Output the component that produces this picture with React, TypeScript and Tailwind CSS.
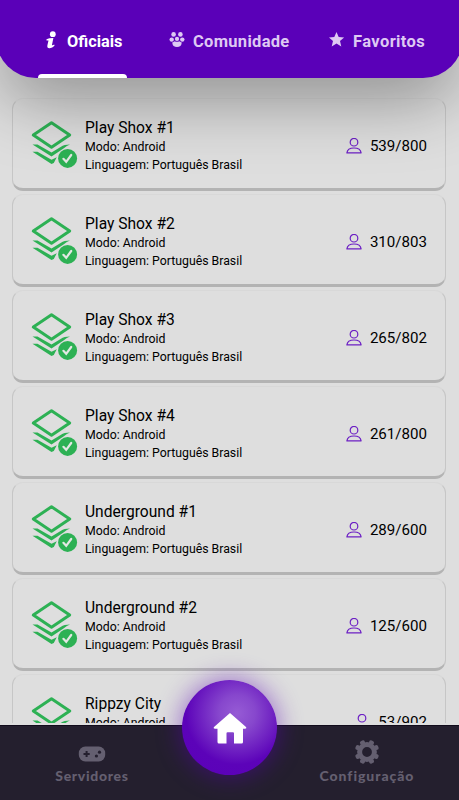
import type { ReactNode } from 'react';

interface Server {
  name: string;
  mode: string;
  language: string;
  players: string;
}

const servers: Server[] = [
  { name: 'Play Shox #1', mode: 'Android', language: 'Português Brasil', players: '539/800' },
  { name: 'Play Shox #2', mode: 'Android', language: 'Português Brasil', players: '310/803' },
  { name: 'Play Shox #3', mode: 'Android', language: 'Português Brasil', players: '265/802' },
  { name: 'Play Shox #4', mode: 'Android', language: 'Português Brasil', players: '261/800' },
  { name: 'Underground #1', mode: 'Android', language: 'Português Brasil', players: '289/600' },
  { name: 'Underground #2', mode: 'Android', language: 'Português Brasil', players: '125/600' },
  { name: 'Rippzy City', mode: 'Android', language: 'Português Brasil', players: '53/902' },
];

function InfoIcon() {
  return (
    <svg width="12" height="18" viewBox="0 0 12 18" fill="currentColor">
      <circle cx="7.8" cy="3.2" r="2.9" />
      <path d="M1.5 8.2Q3.8 7 8.4 7L6.9 14.2q1.2.2 2.3-.8l.3 1.4Q7.2 17.4 4.3 17.2 1.8 17 2.4 14.2L3.5 9.5H1.5Z" />
    </svg>
  );
}

function CommunityIcon() {
  return (
    <svg width="16" height="17" viewBox="0 0 16 17" fill="currentColor">
      <circle cx="4.6" cy="3.4" r="2.3" />
      <circle cx="11.4" cy="3.4" r="2.3" />
      <circle cx="2.7" cy="8.6" r="2.2" />
      <circle cx="13.3" cy="8.6" r="2.2" />
      <circle cx="8" cy="7.9" r="2.1" />
      <path d="M3.2 11.5q1.6-.2 2.5-1.3Q8 11.5 10.3 10.2q.9 1.1 2.5 1.3-.5 4.6-4.8 4.6T3.2 11.5Z" />
    </svg>
  );
}

function StarIcon() {
  return (
    <svg width="16" height="17" viewBox="0 0 16 17" fill="currentColor">
      <path d="M7.5 1 9.7 6.1 15.1 6.5 11 10 12.3 15.6 7.5 12.6 2.7 15.6 4 10 0 6.5 5.3 6.1Z" />
    </svg>
  );
}

function LayersIcon() {
  return (
    <svg width="47" height="48" viewBox="0 0 47 48" className="shrink-0">
      <path d="M20.5 2.8 38.7 15 20.5 27.2 2.3 15Z" fill="none" stroke="#2db154" strokeWidth="3" strokeLinejoin="round" />
      <path d="M1.5 24.6H6.5L20.5 32.5 30 26.7Q33 24.6 39 24.6 36 25.8 32.5 28.5L20.5 36.6Z" fill="#2db154" />
      <path d="M1.5 31.8H6.5L20.5 39.8 25.8 37.2 24.2 40.2 22.8 43 20.5 44Z" fill="#2db154" />
      <circle cx="36.6" cy="38.4" r="9.5" fill="#2db154" />
      <path d="m32.4 38.8 2.8 3 5-6.8" fill="none" stroke="#e4e7e4" strokeWidth="2.2" strokeLinecap="round" />
    </svg>
  );
}

function PlayerIcon() {
  return (
    <svg width="16" height="17" viewBox="0 0 16 17" fill="none" stroke="#6c1fc4" strokeWidth="1.2">
      <circle cx="8" cy="4.2" r="3.8" />
      <path d="M.9 14.9Q1.5 10 8 10T15.1 14.9Z" strokeLinejoin="round" />
    </svg>
  );
}

function GamepadIcon() {
  return (
    <svg width="28" height="16" viewBox="0 0 28 16">
      <rect x=".8" y=".5" width="26.4" height="15" rx="6.5" fill="#645f70" />
      <path d="M5.5 8h6.2M8.6 4.9v6.2" stroke="#241f2e" strokeWidth="2" />
      <circle cx="18.4" cy="10" r="1.6" fill="#241f2e" />
      <circle cx="21.5" cy="6.2" r="1.6" fill="#241f2e" />
    </svg>
  );
}

function GearIcon() {
  return (
    <svg width="24" height="24" viewBox="0 0 24 24">
      <circle cx="12" cy="12" r="7.4" fill="none" stroke="#645f70" strokeWidth="5" />
      <path
        d="m16 2.4 1 .4M21.2 7l.4 1M21.6 16l-.4 1M17 21.2l-1 .4M8 21.6l-1-.4M2.8 17l-.4-1M2.4 8l.4-1M7 2.8l1-.4"
        stroke="#645f70"
        strokeWidth="4"
        strokeLinecap="round"
      />
    </svg>
  );
}

function Tab({ icon, label, className }: { icon: ReactNode; label: string; className: string }) {
  return (
    <div className={`flex items-start pt-[31px] ${className}`}>
      {icon}
      <span className="whitespace-nowrap leading-[22px] font-bold">{label}</span>
    </div>
  );
}

function ServerCard({ server }: { server: Server }) {
  return (
    <div className="flex h-[93px] shrink-0 rounded-[11px] border border-b-[3px] border-x-[#c6c6c6] border-t-[#d8d8d8] border-b-[#b3b3b3] pt-[21px] pr-[18px] pl-[18px]">
      <LayersIcon />
      <div className="ml-[7px] flex-1 whitespace-nowrap">
        <div className="text-[15.6px] leading-[17px]">{server.name}</div>
        <div className="mt-px text-[12.3px] leading-[18px]">Modo: {server.mode}</div>
        <div className="text-[12.3px] leading-[18px]">Linguagem: {server.language}</div>
      </div>
      <div className="flex h-[52px] items-center gap-2 text-[15.1px]">
        <PlayerIcon />
        <span>{server.players}</span>
      </div>
    </div>
  );
}

export default function App() {
  return (
    <div className="relative flex h-[800px] w-[459px] flex-col overflow-hidden bg-[#dedede] font-['Roboto',sans-serif] text-black">
      <header className="relative z-10 -mx-1 flex h-[78px] shrink-0 rounded-b-[40px] bg-[#5a00b8] pl-[49px] text-[#dec9f3] shadow-[0_22px_70px_-4px_rgba(0,0,0,0.4)]">
        <Tab icon={<span className="mr-[10px]"><InfoIcon /></span>} label="Oficiais" className="w-[124px] text-[16.3px] text-white" />
        <Tab icon={<span className="mr-2"><CommunityIcon /></span>} label="Comunidade" className="w-[160px] text-[16.5px] tracking-[0.3px]" />
        <Tab icon={<span className="mr-2"><StarIcon /></span>} label="Favoritos" className="text-[16.5px] tracking-[0.4px]" />
        <div className="absolute bottom-0 left-[42px] h-1 w-[89px] rounded-t-[4px] bg-white" />
      </header>

      <main className="flex h-[645px] shrink-0 flex-col gap-[3px] overflow-hidden pt-[20px] pr-[13px] pl-[12px]">
        {servers.map((server) => (
          <ServerCard key={server.name} server={server} />
        ))}
      </main>

      <nav className="relative mt-[2px] flex h-[75px] shrink-0 justify-between border-t border-[#110b1b] bg-[#241f2e] font-['Lato',sans-serif] text-[14px] leading-[17px] font-black text-[#645f70]">
        <div className="ml-[42px] flex w-[100px] flex-col items-center pt-5">
          <GamepadIcon />
          <span className="mt-[5px] tracking-[0.7px]">Servidores</span>
        </div>
        <div className="mr-[37px] flex w-[110px] flex-col items-center pt-[14px]">
          <GearIcon />
          <span className="mt-[3px] tracking-[0.95px]">Configuração</span>
        </div>
        <button className="absolute -top-[46px] left-[182px] flex size-[95px] items-center justify-center rounded-full bg-[radial-gradient(circle_at_58%_35%,#965bd5_0%,#8747cd_22%,#5c03b9_62%,#5a00b8_100%)] shadow-[0_0_24px_2px_rgba(90,0,184,0.48)]">
          <svg width="34" height="31" viewBox="0 0 34 31" fill="#fff" className="mt-px">
            <path d="M17 0 33 14Q34 15.7 32 15.7H30V29Q30 30.5 28.5 30.5H21V20.2Q21 19.3 20 19.3H14.5Q13.5 19.3 13.5 20.2V30.5H6Q4.5 30.5 4.5 29V15.7H2Q0 15.7 1 14Z" />
          </svg>
        </button>
      </nav>
    </div>
  );
}
